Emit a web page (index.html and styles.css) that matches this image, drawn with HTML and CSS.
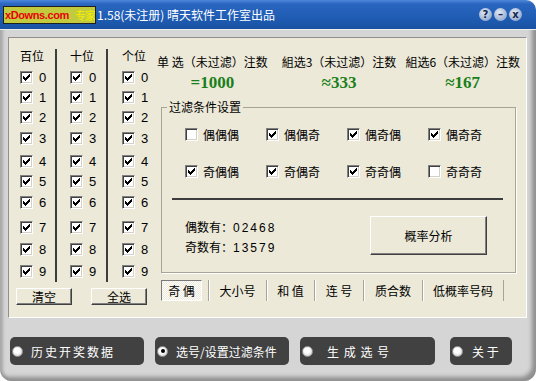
FILE: index.html
```html
<!DOCTYPE html>
<html lang="zh-CN">
  <head>
    <meta charset="UTF-8" />
    <title>选号专家</title>
    <link rel="stylesheet" href="styles.css">
  </head>
  <body>
    <div class="window">
      <!-- Title bar -->
      <div class="titlebar">
        <div class="badge"><span class="site">xDowns.com</span><span class="behind">专家</span></div>
        <span class="title">1.58(未注册) 晴天软件工作室出品</span>
        <div class="title-btns">
          <span class="tbtn">?</span>
          <span class="tbtn">–</span>
          <span class="tbtn">x</span>
        </div>
      </div>

      <div class="frame">
        <div class="panel">
          <!-- Digit columns -->
          <div class="digits">
            <div class="cols">
              <div class="col col-1">
                <div class="col-head">百位</div>
                <div class="row"><span class="cb"><svg viewBox="0 0 7 7"><use href="#tick"/></svg></span>0</div>
                <div class="row"><span class="cb"><svg viewBox="0 0 7 7"><use href="#tick"/></svg></span>1</div>
                <div class="row"><span class="cb"><svg viewBox="0 0 7 7"><use href="#tick"/></svg></span>2</div>
                <div class="row"><span class="cb"><svg viewBox="0 0 7 7"><use href="#tick"/></svg></span>3</div>
                <div class="row"><span class="cb"><svg viewBox="0 0 7 7"><use href="#tick"/></svg></span>4</div>
                <div class="row"><span class="cb"><svg viewBox="0 0 7 7"><use href="#tick"/></svg></span>5</div>
                <div class="row"><span class="cb"><svg viewBox="0 0 7 7"><use href="#tick"/></svg></span>6</div>
                <div class="row"><span class="cb"><svg viewBox="0 0 7 7"><use href="#tick"/></svg></span>7</div>
                <div class="row"><span class="cb"><svg viewBox="0 0 7 7"><use href="#tick"/></svg></span>8</div>
                <div class="row"><span class="cb"><svg viewBox="0 0 7 7"><use href="#tick"/></svg></span>9</div>
              </div>
              <div class="col col-2">
                <div class="col-head">十位</div>
                <div class="row"><span class="cb"><svg viewBox="0 0 7 7"><use href="#tick"/></svg></span>0</div>
                <div class="row"><span class="cb"><svg viewBox="0 0 7 7"><use href="#tick"/></svg></span>1</div>
                <div class="row"><span class="cb"><svg viewBox="0 0 7 7"><use href="#tick"/></svg></span>2</div>
                <div class="row"><span class="cb"><svg viewBox="0 0 7 7"><use href="#tick"/></svg></span>3</div>
                <div class="row"><span class="cb"><svg viewBox="0 0 7 7"><use href="#tick"/></svg></span>4</div>
                <div class="row"><span class="cb"><svg viewBox="0 0 7 7"><use href="#tick"/></svg></span>5</div>
                <div class="row"><span class="cb"><svg viewBox="0 0 7 7"><use href="#tick"/></svg></span>6</div>
                <div class="row"><span class="cb"><svg viewBox="0 0 7 7"><use href="#tick"/></svg></span>7</div>
                <div class="row"><span class="cb"><svg viewBox="0 0 7 7"><use href="#tick"/></svg></span>8</div>
                <div class="row"><span class="cb"><svg viewBox="0 0 7 7"><use href="#tick"/></svg></span>9</div>
              </div>
              <div class="col col-3">
                <div class="col-head">个位</div>
                <div class="row"><span class="cb"><svg viewBox="0 0 7 7"><use href="#tick"/></svg></span>0</div>
                <div class="row"><span class="cb"><svg viewBox="0 0 7 7"><use href="#tick"/></svg></span>1</div>
                <div class="row"><span class="cb"><svg viewBox="0 0 7 7"><use href="#tick"/></svg></span>2</div>
                <div class="row"><span class="cb"><svg viewBox="0 0 7 7"><use href="#tick"/></svg></span>3</div>
                <div class="row"><span class="cb"><svg viewBox="0 0 7 7"><use href="#tick"/></svg></span>4</div>
                <div class="row"><span class="cb"><svg viewBox="0 0 7 7"><use href="#tick"/></svg></span>5</div>
                <div class="row"><span class="cb"><svg viewBox="0 0 7 7"><use href="#tick"/></svg></span>6</div>
                <div class="row"><span class="cb"><svg viewBox="0 0 7 7"><use href="#tick"/></svg></span>7</div>
                <div class="row"><span class="cb"><svg viewBox="0 0 7 7"><use href="#tick"/></svg></span>8</div>
                <div class="row"><span class="cb"><svg viewBox="0 0 7 7"><use href="#tick"/></svg></span>9</div>
              </div>
            </div>
            <div class="pair">
              <button class="btn">清空</button>
              <button class="btn">全选</button>
            </div>
          </div>

          <!-- Counts, filter and tabs -->
          <div class="right">
            <div class="counts">
              <div class="count">
                <span class="count-label">单 选（未过滤）注数</span>
                <span class="value">=1000</span>
              </div>
              <div class="count">
                <span class="count-label">組选3（未过滤）注数</span>
                <span class="value">≈333</span>
              </div>
              <div class="count">
                <span class="count-label">組选6（未过滤）注数</span>
                <span class="value">≈167</span>
              </div>
            </div>

            <fieldset class="filter">
              <legend>过滤条件设置</legend>
              <div class="opts">
                <div class="opt"><span class="cb"></span>偶偶偶</div>
                <div class="opt"><span class="cb"><svg viewBox="0 0 7 7"><use href="#tick"/></svg></span>偶偶奇</div>
                <div class="opt"><span class="cb"><svg viewBox="0 0 7 7"><use href="#tick"/></svg></span>偶奇偶</div>
                <div class="opt"><span class="cb"><svg viewBox="0 0 7 7"><use href="#tick"/></svg></span>偶奇奇</div>
                <div class="opt"><span class="cb"><svg viewBox="0 0 7 7"><use href="#tick"/></svg></span>奇偶偶</div>
                <div class="opt"><span class="cb"><svg viewBox="0 0 7 7"><use href="#tick"/></svg></span>奇偶奇</div>
                <div class="opt"><span class="cb"><svg viewBox="0 0 7 7"><use href="#tick"/></svg></span>奇奇偶</div>
                <div class="opt"><span class="cb"></span>奇奇奇</div>
              </div>
              <div class="rule"></div>
              <div class="lower">
                <div class="parity">
                  <div>偶数有：<span class="nums">02468</span></div>
                  <div>奇数有：<span class="nums">13579</span></div>
                </div>
                <button class="btn big-btn">概率分析</button>
              </div>
            </fieldset>

            <div class="tabs">
              <span class="tab active">奇 偶</span>
              <span class="tab">大小号</span>
              <span class="tab">和 值</span>
              <span class="tab">连 号</span>
              <span class="tab">质合数</span>
              <span class="tab">低概率号码</span>
            </div>
          </div>
        </div>

        <!-- Bottom navigation -->
        <div class="bar">
          <div class="nav"><span class="radio"></span><span class="wide">历史开奖数据</span></div>
          <div class="nav"><span class="radio on"></span><span>选号/设置过滤条件</span></div>
          <div class="nav nav-gen"><span class="radio"></span><span class="gen">生 成 选 号</span></div>
          <div class="nav nav-about"><span class="radio"></span><span>关 于</span></div>
        </div>
      </div>
    </div>

    <svg class="defs" width="0" height="0">
      <symbol id="tick" viewBox="0 0 7 7">
        <path d="M0 2h1v3H0z M1 3h1v3H1z M2 4h1v3H2z M3 3h1v3H3z M4 2h1v3H4z M5 1h1v3H5z M6 0h1v3H6z" />
      </symbol>
    </svg>
  </body>
</html>
```

FILE: styles.css
```css
:root {
  --face: #ece9d8;
  --frame: #d5d5d5;
  --dark-line: #3d3d3d;
  --etch: #a6a497;
  --green: #1a7f1a;
  --nav: #414141;
}

* {
  box-sizing: border-box;
}

body {
  margin: 0;
  background: #fff;
  font-family: "Noto Sans CJK SC", sans-serif;
  font-size: 12px;
  color: #000;
  overflow: hidden;
}

.defs {
  display: block;
}

.window {
  width: 536px;
  height: 381px;
  background: var(--frame);
  border-radius: 0 10px 12px 12px;
  overflow: hidden;
  box-shadow: inset -4px -4px 4px #8e8e8e, inset 3px 0 3px #a8a8a8;
}

/* Title bar */
.titlebar {
  height: 29px;
  display: flex;
  align-items: center;
  background: linear-gradient(#4d88dc, #2a66c0 4px, #1d5ab0 70%, #1a52a2);
  border-radius: 0 10px 0 0;
  color: #fff;
}

.badge {
  display: flex;
  align-items: center;
  justify-content: space-between;
  width: 93px;
  height: 18px;
  margin: 1px 0 0 3px;
  padding-left: 1px;
  background: #c1cb3d;
  border: 1px solid #1e1e1e;
  white-space: nowrap;
  overflow: hidden;
}

.site {
  flex: none;
  color: #e8000b;
  font: bold 11px "Liberation Sans", sans-serif;
  letter-spacing: -0.4px;
}

.behind {
  flex: none;
  color: #f4ee00;
  font-size: 11px;
  line-height: 14px;
  letter-spacing: -1px;
}

.title {
  margin-left: 1px;
  white-space: nowrap;
}

.title-btns {
  display: flex;
  gap: 2px;
  margin-left: auto;
  margin-right: 14px;
}

.tbtn {
  width: 13px;
  height: 13px;
  border-radius: 50%;
  background: radial-gradient(circle at 40% 35%, #e2e9f5, #8ea6cc 80%);
  color: #13264e;
  font: bold 10px/13px "DejaVu Sans", sans-serif;
  text-align: center;
}

/* Frame and main panel */
.frame {
  padding: 7px 9px 0 8px;
  border-top: 1px solid #eeeeee;
}

.panel {
  height: 281px;
  display: flex;
  background: var(--face);
  border: 1px solid;
  border-color: #8f8f8f #fff #fff #8f8f8f;
}

/* Checkbox */
.cb {
  width: 13px;
  height: 13px;
  flex: none;
  display: flex;
  align-items: center;
  justify-content: center;
  background: #fff;
  border: 1px solid;
  border-color: #808080 #fff #fff #808080;
  box-shadow: inset 1px 1px #404040, inset -1px -1px #d4d0c8;
}

.cb svg {
  width: 7px;
  height: 7px;
  shape-rendering: crispEdges;
}

/* Digit columns */
.digits {
  width: 141px;
  padding-top: 11px;
}

.cols {
  display: flex;
}

.col {
  height: 233px;
}

.col-1 {
  width: 48px;
  padding-left: 11px;
  border-right: 2px solid var(--dark-line);
}

.col-2 {
  width: 51px;
  padding-left: 13px;
  border-right: 2px solid var(--dark-line);
}

.col-3 {
  padding-left: 14px;
}

.col-head {
  line-height: 14px;
  margin-bottom: 4px;
}

.row {
  display: flex;
  align-items: center;
  gap: 6px;
  height: 20px;
  font: 13px "Liberation Sans", sans-serif;
}

.row:nth-child(5) { margin-top: 1px; }
.row:nth-child(6) { margin-top: 3px; }
.row:nth-child(8) { margin-top: 1px; }
.row:nth-child(9) { margin-top: 5px; }
.row:nth-child(10) { margin-top: 2px; }
.row:nth-child(11) { margin-top: 2px; }

.btn {
  height: 17px;
  width: 56px;
  padding: 0;
  background: var(--face);
  border: 1px solid;
  border-color: #fff #404040 #404040 #fff;
  box-shadow: inset -1px -1px #808080;
  font: 12px/14px "Noto Sans CJK SC", sans-serif;
  color: #000;
}

.pair {
  display: flex;
  gap: 19px;
  margin: 6px 0 0 7px;
}

/* Right side */
.right {
  flex: 1;
  padding-top: 17px;
}

.counts {
  display: flex;
  padding-left: 7px;
}

.count {
  display: flex;
  flex-direction: column;
  align-items: center;
}

.count + .count {
  margin-left: 14px;
}

.count:last-child {
  margin-left: 9px;
}

.count-label {
  line-height: 14px;
  white-space: nowrap;
}

.value {
  margin-top: 4px;
  font: bold 17px/20px "Liberation Serif", serif;
  color: var(--green);
}

.filter {
  width: 355px;
  margin: 7px 0 0 11px;
  padding: 10px 0 15px;
  min-inline-size: 0;
  border: 1px solid var(--etch);
  box-shadow: 1px 1px 0 #fff;
}

.filter legend {
  margin-left: 5px;
  padding: 0 2px;
  line-height: 14px;
}

.opts {
  display: grid;
  grid-template-columns: repeat(4, 81px);
  row-gap: 17px;
  padding-left: 23px;
}

.opt {
  display: flex;
  align-items: center;
  gap: 5px;
  height: 20px;
}

.rule {
  width: 331px;
  height: 2px;
  margin: 17px 0 0 10px;
  background: var(--dark-line);
}

.lower {
  display: flex;
  margin-top: 16px;
  padding-left: 23px;
}

.parity {
  width: 185px;
  padding-top: 1px;
  line-height: 20px;
}

.nums {
  font: 12px "Liberation Sans", sans-serif;
  letter-spacing: 2px;
}

.big-btn {
  width: 117px;
  height: 39px;
}

/* Tabs */
.tabs {
  display: flex;
  height: 21px;
  margin: 7px 0 0 11px;
}

.tab {
  height: 21px;
  line-height: 21px;
  text-align: center;
  border-left: 1px solid var(--etch);
  box-shadow: inset 1px 0 #fff;
  white-space: nowrap;
}

.tab.active {
  width: 41px;
  margin-right: 6px;
  line-height: 19px;
  border: 1px solid;
  border-color: #7a7a7a #fff #fff #7a7a7a;
  background: repeating-conic-gradient(#fff 0 25%, var(--face) 0 50%) 0 0 / 2px 2px;
  box-shadow: none;
}

.tab:nth-child(2) { width: 58px; }
.tab:nth-child(3) { width: 48px; }
.tab:nth-child(4) { width: 49px; }
.tab:nth-child(5) { width: 59px; }

.tab:nth-child(6) {
  width: 82px;
  border-right: 1px solid var(--etch);
}

/* Bottom navigation */
.bar {
  display: flex;
  margin-top: 19px;
  padding-left: 2px;
}

.nav {
  display: flex;
  align-items: center;
  gap: 8px;
  width: 134px;
  height: 28px;
  padding-left: 2px;
  background: var(--nav);
  border-radius: 5px;
  color: #fff;
  white-space: nowrap;
}

.nav + .nav {
  margin-left: 11px;
}

.nav-gen {
  width: 135px;
}

.nav.nav-about {
  width: 62px;
  margin-left: 15px;
}

.wide {
  letter-spacing: 2px;
}

.gen {
  margin-left: 6px;
  letter-spacing: 1px;
}

.nav-about span:last-child {
  margin-left: 1px;
}

.radio {
  width: 11px;
  height: 11px;
  flex: none;
  display: flex;
  align-items: center;
  justify-content: center;
  border-radius: 50%;
  border: 1px solid #9a9a9a;
  background: radial-gradient(circle at 45% 40%, #fff 35%, #bdbdbd 100%);
}

.radio.on::after {
  content: "";
  width: 4px;
  height: 4px;
  border-radius: 50%;
  background: #000;
}
```
